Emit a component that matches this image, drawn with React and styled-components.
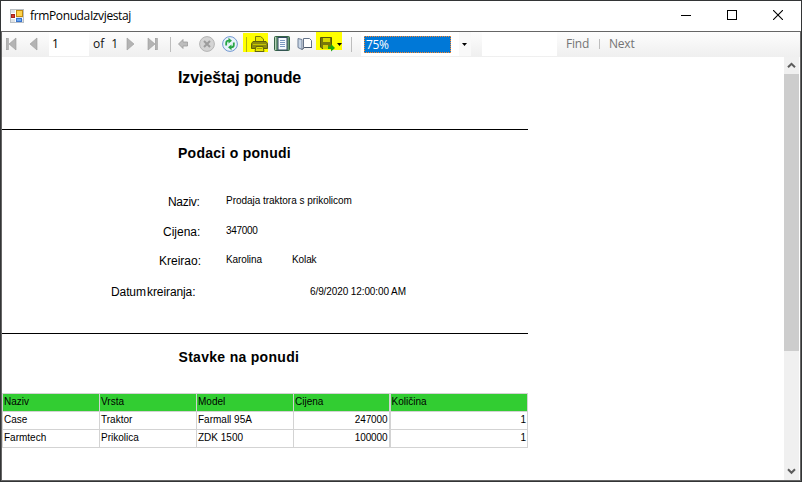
import React from "react";
import styled, { createGlobalStyle } from "styled-components";

const Global = createGlobalStyle`
  *, *::before, *::after { box-sizing: border-box; }
  html, body { margin: 0; padding: 0; overflow: hidden; }
`;

const ui = `"Open Sans", "Noto Sans", sans-serif`;

const Desktop = styled.div`
  width: 802px;
  height: 482px;
  padding: 1px 1px 1px 1px;
  background: #333536;
  font-family: "Liberation Sans", Arial, sans-serif;
  color: #000;
`;

const Window = styled.main`
  width: 800px;
  height: 480px;
  display: flex;
  flex-direction: column;
  background: #fff;
  border-bottom: 1px solid #666;
`;

const TitleBar = styled.header`
  height: 30px;
  flex: none;
  display: flex;
  align-items: center;
  padding-left: 9px;
`;

const Caption = styled.h1`
  flex: 1;
  margin: 0 0 0 5px;
  font: 400 12px/16px ${ui};
  letter-spacing: ${(p) => p.$spacing}px;
`;

const WindowButton = styled.button`
  width: 46px;
  height: 30px;
  padding: 0 0 2px;
  border: 0;
  background: transparent;
  display: grid;
  place-items: center;
`;

const Viewer = styled.section`
  flex: 1;
  min-height: 0;
  display: flex;
  flex-direction: column;
  border-top: 1px solid #666;
  border-left: 1px solid #666;
  border-right: 1px solid #666;
`;

const Toolbar = styled.nav`
  height: 25px;
  flex: none;
  display: flex;
  align-items: flex-start;
  background: linear-gradient(#fdfdfd, #efefef);
  font: 400 12px/16px ${ui};
`;

const ToolIcon = styled.span`
  display: block;
  flex: none;
  height: 16px;
  margin-top: ${(p) => p.$top ?? 4}px;
  margin-left: ${(p) => p.$gap || 0}px;
  svg { display: block; }
`;

const Separator = styled.i`
  flex: none;
  width: 1px;
  height: ${(p) => p.$height || 15}px;
  margin: ${(p) => p.$top ?? 5}px 0 0 ${(p) => p.$gap}px;
  background: ${(p) => p.$color || "#bdbdbd"};
`;

const ToolField = styled.div`
  flex: none;
  width: ${(p) => p.$width}px;
  height: 24px;
  margin-left: ${(p) => p.$gap}px;
  padding: 4px 0 0 3px;
  background: #fff;
`;

const ToolText = styled.span`
  flex: none;
  width: ${(p) => p.$width}px;
  margin: 4px 0 0 ${(p) => p.$gap}px;
  color: ${(p) => (p.$muted ? "#747474" : "#111")};
  word-spacing: ${(p) => p.$words || 0}px;
  letter-spacing: ${(p) => p.$spacing || 0}px;
  white-space: nowrap;
`;

const Highlight = styled.div`
  flex: none;
  display: flex;
  width: ${(p) => p.$width}px;
  height: ${(p) => p.$height}px;
  margin: ${(p) => p.$top}px 0 0 ${(p) => p.$gap}px;
  background: #ff0;
`;

const ZoomBox = styled.div`
  flex: none;
  display: flex;
  width: 110px;
  height: 24px;
  margin-left: 9px;
  padding: 4px 0 0 3px;
  background: linear-gradient(90deg, #fff 98px, #f9f9f9 98px);
`;

const ZoomValue = styled.div`
  width: 87px;
  height: 17px;
  padding-left: 1px;
  background: #0078d7;
  border: 1px dotted #ff8728;
  color: #fff;
  line-height: 15px;
  letter-spacing: -0.3px;
`;

const Body = styled.div`
  flex: 1;
  min-height: 0;
  display: flex;
`;

const Report = styled.article`
  flex: 1;
  min-width: 0;
`;

const Section = styled.section`
  width: 526px;
  height: ${(p) => p.$height}px;
  padding-top: ${(p) => p.$top}px;
  border-bottom: ${(p) => (p.$ruled ? "1px solid #000" : "0")};
`;

const Heading = styled.h2`
  margin: 0 0 0 ${(p) => p.$left ?? 176}px;
  font-size: ${(p) => p.$size}px;
  line-height: 18px;
  font-weight: 700;
  letter-spacing: ${(p) => p.$spacing}px;
  white-space: nowrap;
`;

const Fields = styled.dl`
  margin: 32px 0 0;
`;

const Field = styled.div`
  display: flex;
  height: ${(p) => p.$height}px;
  padding-left: ${(p) => p.$left}px;
`;

const Term = styled.dt`
  flex: none;
  width: ${(p) => p.$width}px;
  font-size: 12px;
  line-height: 16px;
  letter-spacing: ${(p) => p.$spacing}px;
  word-spacing: ${(p) => p.$words || 0}px;
  white-space: nowrap;
`;

const Value = styled.dd`
  flex: none;
  width: ${(p) => p.$width || 130}px;
  margin: ${(p) => p.$top ?? -1}px 0 0;
  font-size: 10px;
  line-height: 16px;
  letter-spacing: ${(p) => p.$spacing || 0}px;
  white-space: nowrap;
`;

const Table = styled.table`
  width: 525px;
  margin-top: 27px;
  border-collapse: collapse;
  table-layout: fixed;
  font-size: 10px;
  line-height: 16px;
`;

const Col = styled.col`
  width: ${(p) => p.$width}px;
`;

const Cell = styled.td`
  height: 18px;
  padding: 0 1px 1px;
  border: 1px solid #d3d3d3;
  border-left-width: ${(p) => (p.$thick ? 2 : 1)}px;
  text-align: ${(p) => (p.$right ? "right" : "left")};
  background: ${(p) => (p.$head ? "#32cd32" : "#fff")};
  font-weight: 400;
  letter-spacing: ${(p) => (p.$right ? -0.1 : 0)}px;
`;

const ScrollBar = styled.aside`
  flex: none;
  width: 16px;
  border-right: 1px solid #fff;
  display: flex;
  flex-direction: column;
  background: #f0f0f0;
`;

const ScrollButton = styled.button`
  height: 17px;
  padding: 0;
  border: 0;
  background: transparent;
  display: grid;
  place-items: center;
`;

const Thumb = styled.div`
  height: 277px;
  margin-bottom: auto;
  background: #cdcdcd;
`;

const FormIcon = () => (
  <svg width="15" height="15" viewBox="0 0 15 15">
    <rect x=".5" y=".5" width="13" height="13" fill="#dfe3e6" stroke="#b9bfc4" />
    <path d="M5.500 1v12M1 9.500h12M1 4.500h4" stroke="#fff" />
    <rect x="6.500" y="1.500" width="6" height="6" fill="#ffd34a" stroke="#c08a10" />
    <rect x="1.500" y="5.500" width="3" height="3" fill="#d9362a" stroke="#a3241d" />
    <rect x="6.500" y="9.500" width="5" height="3" fill="#6aa8f2" stroke="#3973cc" />
  </svg>
);

const NavIcon = ({ back, edge }) => (
  <svg width="11" height="16" viewBox="0 0 11 16" fill="#b4b4b4" stroke="#9b9b9b" strokeWidth=".6">
    {edge && <rect x={back ? 0.3 : 8.3} y="2.3" width="2" height="11.4" />}
    {back
      ? <path d={edge ? "M10 2v12L3 8z" : "M8 2v12L1 8z"} />
      : <path d="M1 2v12l7-6z" />}
  </svg>
);

const BackIcon = () => (
  <svg width="10" height="16" viewBox="0 0 10 16">
    <path d="M.5 8l4.500-4.500v2.500h4.500v4H5v2.500z" fill="#bdbdbd" stroke="#9a9a9a" strokeWidth=".8" />
  </svg>
);

const StopIcon = () => (
  <svg width="16" height="16" viewBox="0 0 16 16">
    <circle cx="8" cy="8" r="7.400" fill="#d4d4d4" stroke="#b4b4b4" />
    <path d="M5 5l6 6M11 5l-6 6" stroke="#9c9c9c" strokeWidth="2" />
  </svg>
);

const RefreshIcon = () => (
  <svg width="16" height="16" viewBox="0 0 16 16">
    <circle cx="8" cy="8" r="7.400" fill="#e8f2fb" stroke="#7096d0" />
    <path d="M4.200 9.500V7Q4.200 4.700 7 4.700M11.800 6.500V9Q11.800 11.300 9 11.300" fill="none" stroke="#27a544" strokeWidth="1.800" />
    <path d="M6.500 1.800l3.500 2.900-3.500 2.900zM9.500 8.400L6 11.300l3.500 2.900z" fill="#27a544" />
  </svg>
);

const PrintIcon = () => (
  <svg width="17" height="16" viewBox="0 0 17 16">
    <path d="M4.500 6V.5h5l3 2.500v3" fill="#eaea00" stroke="#77770a" />
    <path d="M2 5.500h13l1.500 2v5H.5v-5z" fill="#8c8c0c" stroke="#5f5f0a" />
    <path d="M2 8.500h13" stroke="#c6c600" />
    <path d="M5 10.500h7l1 5H4z" fill="#e6e600" stroke="#66660a" />
    <path d="M6 12.500h5" stroke="#a4a40a" />
  </svg>
);

const LayoutIcon = () => (
  <svg width="16" height="16" viewBox="0 0 16 16">
    <rect x=".5" y=".5" width="15" height="14" rx="1" fill="#6b9a74" stroke="#356345" />
    <path d="M1.500 1v13" stroke="#b5d0b9" />
    <rect x="4" y="1.500" width="9" height="12.500" fill="#f6faff" stroke="#304861" strokeWidth="1" />
    <path d="M6 4.500h5M6 6.500h5M6 8.500h5M6 10.500h5" stroke="#7c98c0" />
  </svg>
);

const SetupIcon = () => (
  <svg width="16" height="16" viewBox="0 0 16 16">
    <path d="M1 2.500l4 1v10l-4-2z" fill="#c9d6e6" stroke="#6e7e95" />
    <path d="M6.500 2.500h6l2 2v7h-8z" fill="#fff" stroke="#66748a" />
    <path d="M5 13.500l2.500-2H15" fill="none" stroke="#4a5668" />
  </svg>
);

const SaveIcon = () => (
  <svg width="15" height="16" viewBox="0 0 15 16">
    <path d="M.5 1.500h11v11H2l-1.500-1.500z" fill="#77770a" stroke="#55550a" />
    <rect x="3" y="2" width="7" height="4" fill="#d8d800" />
    <rect x="3" y="9" width="5" height="4" fill="#d0d000" />
    <path d="M8 10.500h3V8l4 4-4 3.500V13H8z" fill="#22a80c" />
  </svg>
);

const Caret = () => (
  <svg width="5" height="16" viewBox="0 0 5 16"><path d="M0 7h5L2.500 10z" /></svg>
);

const Chevron = ({ down }) => (
  <svg width="9" height="7" viewBox="0 0 9 7">
    <path d={down ? "M1 1.300l3.500 3.500L8 1.300" : "M1 5.300l3.500-3.500L8 5.300"} fill="none" stroke="#5c5c5c" strokeWidth="2" />
  </svg>
);

const fields = [
  { label: "Naziv:", left: 166, width: 58, spacing: -0.3, height: 30, values: [{ text: "Prodaja traktora s prikolicom", spacing: -0.03 }] },
  { label: "Cijena:", left: 161, width: 63, spacing: 0, height: 29, values: [{ text: "347000", spacing: -0.3 }] },
  { label: "Kreirao:", left: 157, width: 67, spacing: 0, height: 31, values: [{ text: "Karolina", width: 66, spacing: -0.1 }, { text: "Kolak", spacing: -0.1 }] },
  { label: "Datum kreiranja:", left: 109, width: 199, spacing: -0.1, words: -2, height: 16, values: [{ text: "6/9/2020 12:00:00 AM", spacing: -0.1, top: 0 }] },
];

const columns = [
  { title: "Naziv", width: 97 },
  { title: "Vrsta", width: 97 },
  { title: "Model", width: 97 },
  { title: "Cijena", width: 96, right: true },
  { title: "Količina", width: 138, right: true, thick: true },
];

const items = [
  ["Case", "Traktor", "Farmall 95A", "247000", "1"],
  ["Farmtech", "Prikolica", "ZDK 1500", "100000", "1"],
];

export default function App() {
  return (
    <Desktop>
      <Global />
      <Window>
        <TitleBar>
          <FormIcon />
          <Caption $spacing={-0.37}>frmPonudaIzvjestaj</Caption>
          <WindowButton aria-label="Minimize">
            <svg width="10" height="10"><path d="M0 5.500h10" stroke="#000" /></svg>
          </WindowButton>
          <WindowButton aria-label="Maximize">
            <svg width="10" height="10"><rect x=".5" y=".5" width="9" height="9" fill="none" stroke="#000" /></svg>
          </WindowButton>
          <WindowButton aria-label="Close">
            <svg width="10" height="10"><path d="M0 0l10 10M10 0L0 10" stroke="#000" strokeWidth="1.100" /></svg>
          </WindowButton>
        </TitleBar>
        <Viewer>
          <Toolbar>
            <ToolIcon $gap={4}><NavIcon back edge /></ToolIcon>
            <ToolIcon $gap={12}><NavIcon back /></ToolIcon>
            <ToolField $gap={9} $width={40}>1</ToolField>
            <ToolText $gap={4} $width={33} $words={4}>of 1</ToolText>
            <ToolIcon><NavIcon /></ToolIcon>
            <ToolIcon $gap={10}><NavIcon edge /></ToolIcon>
            <Separator $gap={12} />
            <ToolIcon $gap={7}><BackIcon /></ToolIcon>
            <ToolIcon $gap={11}><StopIcon /></ToolIcon>
            <ToolIcon $gap={7}><RefreshIcon /></ToolIcon>
            <Highlight $gap={5} $width={25} $top={1} $height={19}>
              <Separator $gap={3} $top={4} $color="#b2b212" />
              <ToolIcon $gap={4} $top={3}><PrintIcon /></ToolIcon>
            </Highlight>
            <ToolIcon $gap={6}><LayoutIcon /></ToolIcon>
            <ToolIcon $gap={7}><SetupIcon /></ToolIcon>
            <Highlight $gap={3} $width={26} $top={0} $height={18}>
              <ToolIcon $gap={4}><SaveIcon /></ToolIcon>
              <ToolIcon $gap={2}><Caret /></ToolIcon>
            </Highlight>
            <Separator $gap={9} />
            <ZoomBox>
              <ZoomValue>75%</ZoomValue>
              <ToolIcon $gap={11} $top={0}><Caret /></ToolIcon>
            </ZoomBox>
            <ToolField $gap={11} $width={75} />
            <ToolText $gap={9} $width={33} $spacing={-0.2} $muted>Find</ToolText>
            <Separator $top={7} $height={10} $gap={0} />
            <ToolText $gap={9} $width={30} $spacing={-0.2} $muted>Next</ToolText>
          </Toolbar>
          <Body>
            <Report>
              <Section $height={73} $top={12} $ruled>
                <Heading $size={16} $spacing={-0.08}>Izvještaj ponude</Heading>
              </Section>
              <Section $height={204} $top={14} $ruled>
                <Heading $size={14} $spacing={0.27}>Podaci o ponudi</Heading>
                <Fields>
                  {fields.map((f) => (
                    <Field key={f.label} $left={f.left} $height={f.height}>
                      <Term $width={f.width} $spacing={f.spacing} $words={f.words}>{f.label}</Term>
                      {f.values.map((v) => (
                        <Value key={v.text} $width={v.width} $spacing={v.spacing} $top={v.top}>{v.text}</Value>
                      ))}
                    </Field>
                  ))}
                </Fields>
              </Section>
              <Section $height={146} $top={14}>
                <Heading $size={14} $left={176.5} $spacing={0.3}>Stavke na ponudi</Heading>
                <Table>
                  <colgroup>
                    {columns.map((c) => <Col key={c.title} $width={c.width} />)}
                  </colgroup>
                  <thead>
                    <tr>{columns.map((c) => <Cell as="th" key={c.title} $head $thick={c.thick}>{c.title}</Cell>)}</tr>
                  </thead>
                  <tbody>
                    {items.map((row) => (
                      <tr key={row[0]}>
                        {row.map((text, i) => (
                          <Cell key={columns[i].title} $right={columns[i].right} $thick={columns[i].thick}>{text}</Cell>
                        ))}
                      </tr>
                    ))}
                  </tbody>
                </Table>
              </Section>
            </Report>
            <ScrollBar>
              <ScrollButton aria-label="Scroll up"><Chevron /></ScrollButton>
              <Thumb />
              <ScrollButton aria-label="Scroll down"><Chevron down /></ScrollButton>
            </ScrollBar>
          </Body>
        </Viewer>
      </Window>
    </Desktop>
  );
}
